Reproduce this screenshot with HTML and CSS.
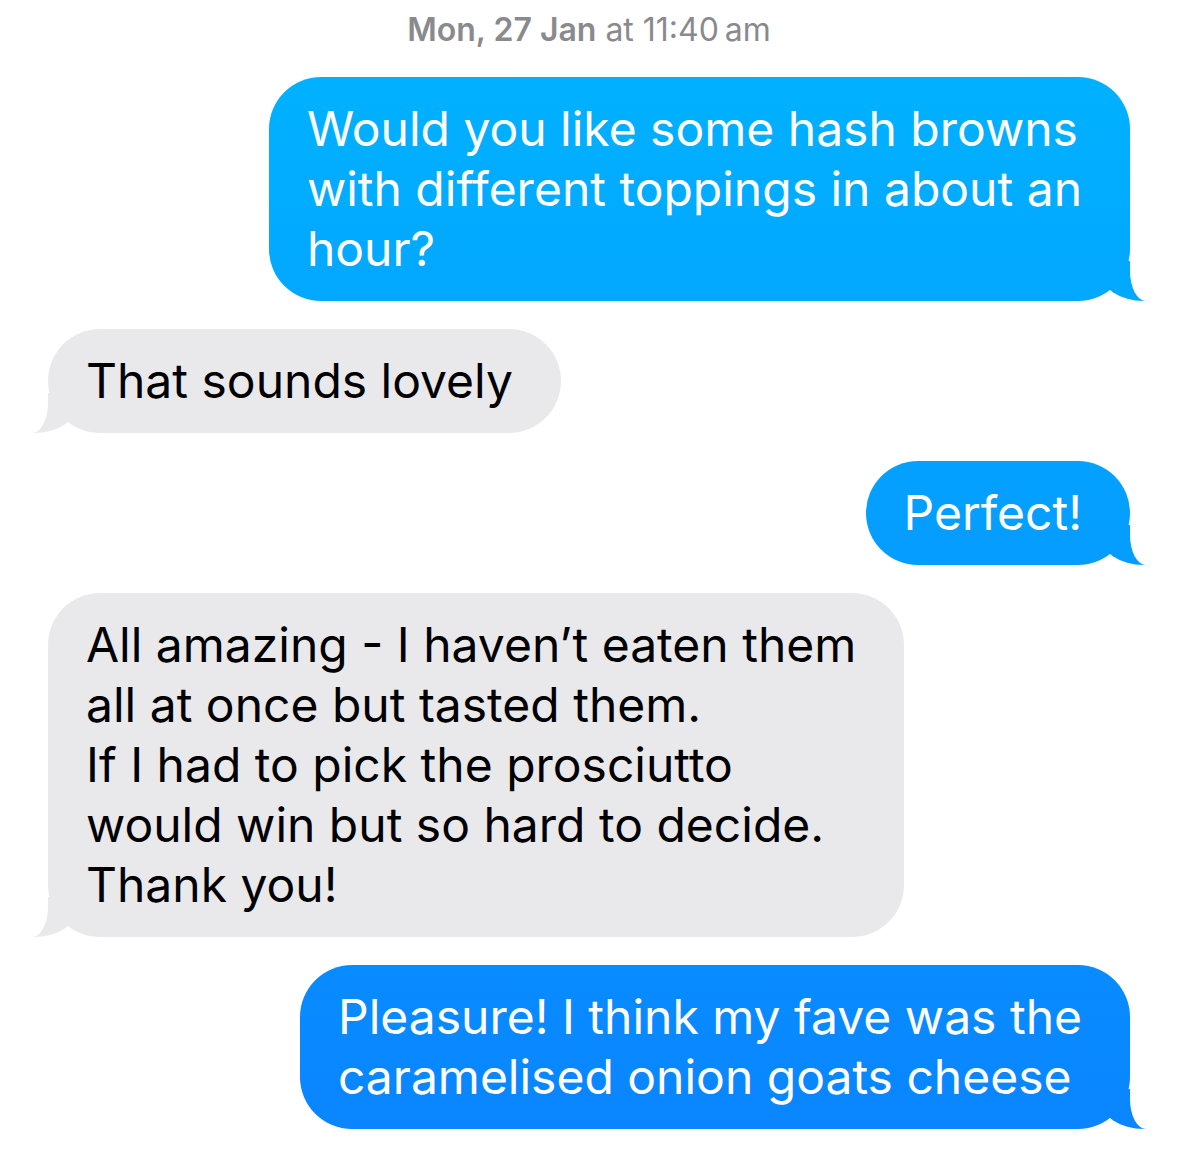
FILE: index.html
```html
<!DOCTYPE html>
<html lang="en-GB">
<head>
  <meta charset="UTF-8">
  <title>Messages</title>
  <link rel="stylesheet" href="styles.css">
</head>
<body>

  <main class="thread">
    <p class="timestamp"><b>Mon, 27 Jan</b> at 11:40&#8201;am</p>

    <div class="bubble sent">
      Would you like some hash browns<br>
      with different toppings in about an<br>
      hour?
    </div>

    <div class="bubble received">
      That sounds lovely
    </div>

    <div class="bubble sent">
      Perfect!
    </div>

    <div class="bubble received">
      All amazing - I haven’t eaten them<br>
      all at once but tasted them.<br>
      If I had to pick the prosciutto<br>
      would win but so hard to decide.<br>
      Thank you!
    </div>

    <div class="bubble sent">
      Pleasure! I think my fave was the<br>
      caramelised onion goats cheese
    </div>
  </main>

</body>
</html>
```

FILE: styles.css
```css
body {
  margin: 0;
  background: #fff;
  font-family: "Inter", "Noto Sans", sans-serif;
}
.thread {
  display: flex;
  flex-direction: column;
  gap: 28px;
  padding: 0 49px 0 48px;
}
.timestamp {
  margin: 0 0 -1px;
  padding-top: 10px;
  text-align: center;
  font-size: 32px;
  line-height: 40px;
  color: #8a8a8e;
}
.timestamp b {
  font-weight: 600;
}
.bubble {
  position: relative;
  padding: 22px 48px 22px 38px;
  border-radius: 52px;
  font-size: 48px;
  line-height: 60px;
  white-space: nowrap;
}
.sent {
  align-self: flex-end;
  color: #fff;
  background: linear-gradient(#00b4ff, #0a84ff) fixed;
}
.received {
  align-self: flex-start;
  color: #000;
  background: #e9e9eb;
}
/* bubble tails */
.bubble::before,
.bubble::after {
  content: "";
  position: absolute;
  bottom: 0;
  height: 40px;
}
.sent::before {
  right: -16px;
  width: 46px;
  background: inherit;
  border-bottom-left-radius: 44px 30px;
}
.sent::after {
  right: -40px;
  width: 40px;
  background: #fff;
  border-bottom-left-radius: 16px 30px;
}
.received::before {
  left: -16px;
  width: 46px;
  background: inherit;
  border-bottom-right-radius: 44px 30px;
}
.received::after {
  left: -40px;
  width: 40px;
  background: #fff;
  border-bottom-right-radius: 16px 30px;
}
```
